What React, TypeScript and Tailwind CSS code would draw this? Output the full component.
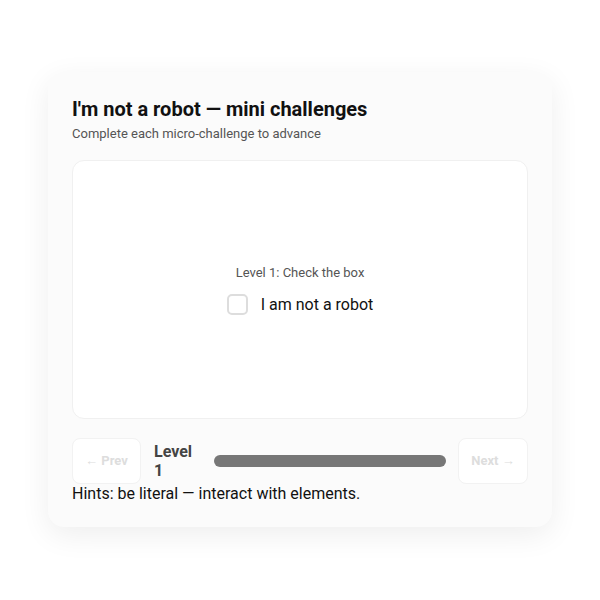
import { useState } from 'react'

export default function App() {
  const [checked, setChecked] = useState(false)

  return (
    <div className="min-h-screen w-full bg-white flex justify-center pt-[72px]" style={{ fontFamily: 'Roboto, "Liberation Sans", sans-serif' }}>
      <div className="w-[504px] h-[455px] rounded-2xl bg-[#fbfbfb] shadow-[0_8px_30px_rgba(0,0,0,0.07)] px-6 pt-6 pb-6">
        <h1 className="text-[20px] leading-[26px] font-bold text-[#111]">I'm not a robot — mini challenges</h1>
        <p className="mt-[2px] text-[13px] leading-[20px] text-[#555]">Complete each micro-challenge to advance</p>

        {/* challenge panel */}
        <div className="mt-[16px] h-[259px] rounded-xl bg-white border border-[#f0f0f0] flex flex-col items-center justify-center gap-[10px]">
          <p className="text-[13px] leading-[20px] text-[#555]">Level 1: Check the box</p>
          <label className="flex items-center gap-[13px] cursor-pointer">
            <span
              onClick={() => setChecked(!checked)}
              className="w-[21px] h-[21px] rounded-[5px] border-2 border-[#ddd] bg-white flex items-center justify-center"
            >
              {checked && <span className="w-[10px] h-[10px] rounded-sm bg-[#555]" />}
            </span>
            <span className="text-[16px] leading-[24px] text-[#111]">I am not a robot</span>
          </label>
        </div>

        {/* nav row */}
        <div className="mt-[19px] flex items-center gap-3">
          <button disabled className="w-[69px] h-[46px] rounded-lg border border-[#f2f2f2] bg-white text-[13px] font-bold text-[#ddd]">← Prev</button>
          <div className="w-[49px] pl-[1px] text-[16px] leading-[19px] font-bold text-[#444]">Level 1</div>
          <div className="flex-1 h-3 rounded-full bg-[#777]" />
          <button disabled className="w-[70px] h-[46px] rounded-lg border border-[#f2f2f2] bg-white text-[13px] font-bold text-[#ddd]">Next →</button>
        </div>

        <p className="text-[16px] leading-[20px] text-[#111]">Hints: be literal — interact with elements.</p>
      </div>
    </div>
  )
}
